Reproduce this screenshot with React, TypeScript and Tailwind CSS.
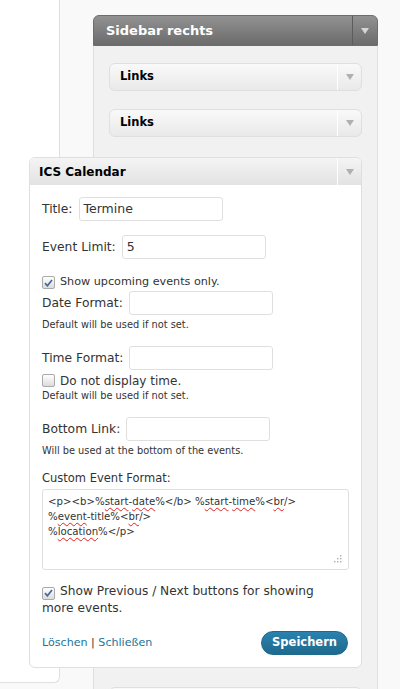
import React from 'react';

const sans = "font-['DejaVu_Sans',Verdana,sans-serif]";

function Arrow({ color }: { color: string }) {
  return (
    <svg width="8" height="6" viewBox="0 0 8 6">
      <path d="M0 0h8L4 6z" fill={color} />
    </svg>
  );
}

function Check({ checked }: { checked?: boolean }) {
  return (
    <span className="inline-flex w-[13px] h-[13px] shrink-0 items-center justify-center border border-[#aaa] rounded-[2px] bg-gradient-to-b from-[#ffffff] to-[#dcdcdc]">
      {checked && (
        <svg width="9" height="8" viewBox="0 0 9 8">
          <path d="M1 4.2l2.4 2.6L8 1" stroke="#47679a" strokeWidth="1.7" fill="none" />
        </svg>
      )}
    </span>
  );
}

function Field({ label, value, className }: { label: string; value?: string; className: string }) {
  return (
    <div className={`flex items-center h-[24px] ${className}`}>
      <span className="text-[12.3px] text-[#333]">{label}</span>
      <div className="ml-[6px] w-[144px] h-[24px] border border-[#dfdfdf] rounded-[3px] bg-white flex items-center pl-[4px] text-[12.5px] text-[#333]">
        {value}
      </div>
    </div>
  );
}

function SmallWidget({ title, className = '' }: { title?: string; className?: string }) {
  return (
    <div className={`flex shrink-0 h-[28px] border border-[#dfdfdf] rounded-[6px] bg-gradient-to-b from-[#f9f9f9] to-[#e9e9e9] ${className}`}>
      <div className="flex-1 flex items-center pl-[10px] text-[11.5px] font-bold text-black">{title}</div>
      <div className="w-[24px] border-l border-white flex items-center justify-center">
        <Arrow color="#b0b0b0" />
      </div>
    </div>
  );
}

function Sq({ children }: { children: React.ReactNode }) {
  return <span className="underline decoration-wavy decoration-[#e02020] decoration-[1px] underline-offset-2">{children}</span>;
}

export default function App() {
  return (
    <div className={`w-[400px] h-[689px] overflow-hidden flex items-start bg-[#f9f9f9] ${sans}`}>
      <div className="w-[60px] h-[683px] shrink-0 bg-white border-r border-b border-[#dfdfdf] rounded-br-[6px]" />

      <div className="ml-[33px] mt-[15px] w-[285px] h-[674px] shrink-0 flex flex-col relative z-10">
        <div className="flex shrink-0 h-[31px] rounded-t-[6px] border border-[#6d6d6d] bg-gradient-to-b from-[#929292] to-[#6b6b6b]">
          <div className="flex-1 flex items-center pl-[12px] text-[13px] font-bold text-white">Sidebar rechts</div>
          <div className="w-[25px] border-l border-[#5c5c5c] flex items-center justify-center">
            <Arrow color="#d6d6d6" />
          </div>
        </div>

        <div className="flex-1 bg-[#f1f1f1] border-x border-[#dfdfdf] px-[15px] pt-[17px]">
          <SmallWidget title="Links" />
          <SmallWidget title="Links" className="mt-[18px]" />

          <div className="mt-[20px] ml-[-80px] w-[333px] border border-[#dfdfdf] rounded-[6px] bg-white">
            <div className="flex h-[27px] rounded-t-[6px] bg-gradient-to-b from-[#f4f4f4] to-[#e3e3e3]">
              <div className="flex-1 flex items-center pl-[9px] text-[12px] font-bold text-black">ICS Calendar</div>
              <div className="w-[24px] border-l border-white flex items-center justify-center">
                <Arrow color="#b0b0b0" />
              </div>
            </div>

            <div className="px-[12px] pb-[12px] text-[#333]">
              <Field label="Title:" value="Termine" className="mt-[12px]" />
              <Field label="Event Limit:" value="5" className="mt-[14px]" />

              <div className="mt-[15px] h-[17px] flex items-center gap-[5px] text-[11.2px]">
                <Check checked />
                <span>Show upcoming events only.</span>
              </div>
              <Field label="Date Format:" className="mt-0" />
              <div className="mt-[3px] h-[14px] flex items-center text-[9.8px]">Default will be used if not set.</div>

              <Field label="Time Format:" className="mt-[14px]" />
              <div className="mt-[2px] h-[17px] flex items-center gap-[5px] text-[12px]">
                <Check />
                <span>Do not display time.</span>
              </div>
              <div className="h-[14px] flex items-center text-[9.8px]">Default will be used if not set.</div>

              <Field label="Bottom Link:" className="mt-[14px]" />
              <div className="mt-[3px] h-[14px] flex items-center text-[9.8px]">Will be used at the bottom of the events.</div>

              <div className="mt-[12px] h-[18px] flex items-center text-[11.5px]">Custom Event Format:</div>
              <div className="mt-[1px] relative h-[81px] border border-[#dfdfdf] rounded-[3px] bg-white pl-[5px] pt-[4px] text-[10.2px] leading-[15px] text-[#333]">
                <div>
                  &lt;p&gt;&lt;b&gt;%<Sq>start</Sq>-<Sq>date</Sq>%&lt;/b&gt; %<Sq>start</Sq>-<Sq>time</Sq>%&lt;<Sq>br</Sq>/&gt;
                </div>
                <div>
                  %<Sq>event</Sq>-title%&lt;<Sq>br</Sq>/&gt;
                </div>
                <div>
                  %<Sq>location</Sq>%&lt;/p&gt;
                </div>
                <svg className="absolute right-[6px] bottom-[6px]" width="8" height="8" viewBox="0 0 8 8">
                  <rect x="6" y="0" width="1.4" height="1.4" fill="#aaa" />
                  <rect x="3" y="3" width="1.4" height="1.4" fill="#aaa" />
                  <rect x="6" y="3" width="1.4" height="1.4" fill="#aaa" />
                  <rect x="0" y="6" width="1.4" height="1.4" fill="#aaa" />
                  <rect x="3" y="6" width="1.4" height="1.4" fill="#aaa" />
                  <rect x="6" y="6" width="1.4" height="1.4" fill="#aaa" />
                </svg>
              </div>

              <div className="mt-[13px] text-[12.2px] leading-[17px]">
                <span className="inline-flex align-[-2px] mr-[5px]">
                  <Check checked />
                </span>
                Show Previous / Next buttons for showing more events.
              </div>

              <div className="mt-[14px] h-[24px] flex items-center justify-between">
                <div className="text-[11.1px] text-[#21759b]">
                  Löschen <span className="text-[#333]">|</span> Schließen
                </div>
                <div className="h-[24px] px-[10px] mr-[1px] rounded-full border border-[#1e6a8d] bg-gradient-to-b from-[#2a82ae] to-[#1e6a8d] flex items-center text-[11.5px] font-bold text-white">
                  Speichern
                </div>
              </div>
            </div>
          </div>

          <SmallWidget className="mt-[19px]" />
        </div>
      </div>
    </div>
  );
}
